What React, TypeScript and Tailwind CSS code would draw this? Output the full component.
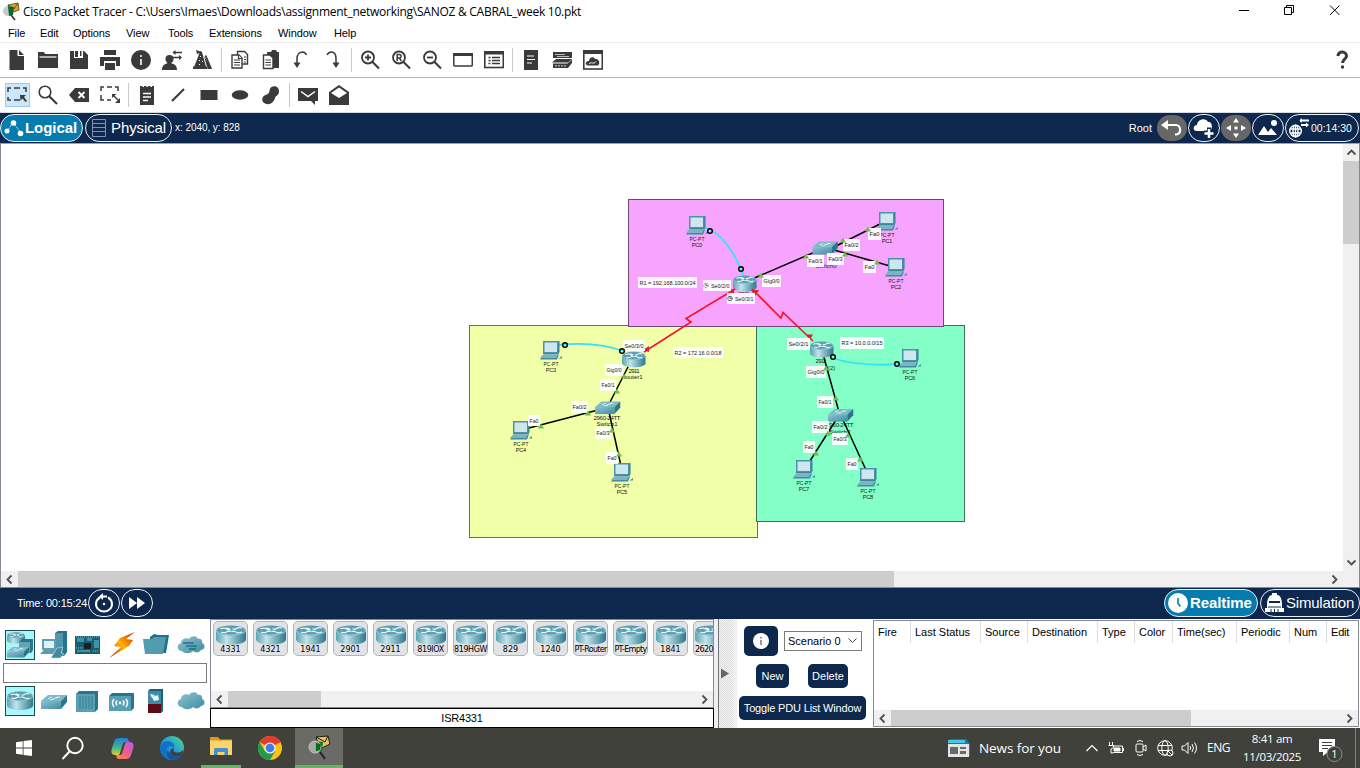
import React from "react";

const INK = "#3a3a3a";

function Ic({ children, w = 20, h = 20 }: { children: React.ReactNode; w?: number; h?: number }) {
  return (
    <svg width={w} height={h} viewBox={`0 0 ${w} ${h}`} fill={INK} className="shrink-0">
      {children}
    </svg>
  );
}

function Cell({ children }: { children: React.ReactNode }) {
  return <div className="flex w-[31px] shrink-0 items-center justify-center">{children}</div>;
}

function Sep() {
  return (
    <div className="flex w-[6px] shrink-0 items-center justify-center">
      <div className="h-6 w-px bg-[#c9c9c9]" />
    </div>
  );
}

function Defs() {
  return (
    <svg width="0" height="0" className="h-0 w-0">
      <defs>
        <linearGradient id="teal" x1="0" x2="1" y1="0" y2="0">
          <stop offset="0" stopColor="#5aa3b5" />
          <stop offset="0.35" stopColor="#c3e3ea" />
          <stop offset="1" stopColor="#2a788f" />
        </linearGradient>
        <linearGradient id="teal2" x1="0" x2="1" y1="0" y2="1">
          <stop offset="0" stopColor="#8fc3cf" />
          <stop offset="1" stopColor="#3d8da3" />
        </linearGradient>
        <linearGradient id="bolt" x1="0" x2="1" y1="1" y2="0">
          <stop offset="0" stopColor="#d81e05" />
          <stop offset="0.5" stopColor="#ffb300" />
          <stop offset="1" stopColor="#d81e05" />
        </linearGradient>
        <linearGradient id="edge" x1="0" x2="1" y1="1" y2="0">
          <stop offset="0" stopColor="#0c59a4" />
          <stop offset="0.5" stopColor="#1b9de2" />
          <stop offset="1" stopColor="#5bdc70" />
        </linearGradient>
        <linearGradient id="cop1" x1="0" x2="0" y1="0" y2="1">
          <stop offset="0" stopColor="#1f7fe8" />
          <stop offset="0.55" stopColor="#39b98a" />
          <stop offset="1" stopColor="#e8c72c" />
        </linearGradient>
        <linearGradient id="cop2" x1="1" x2="0" y1="0" y2="1">
          <stop offset="0" stopColor="#b65bea" />
          <stop offset="0.5" stopColor="#ee5b93" />
          <stop offset="1" stopColor="#f7923a" />
        </linearGradient>
        <pattern id="dither" width="2" height="2" patternUnits="userSpaceOnUse">
          <rect width="2" height="2" fill="#f4f4f4" />
          <rect width="1" height="1" fill="#dcdcdc" />
          <rect x="1" y="1" width="1" height="1" fill="#dcdcdc" />
        </pattern>
      </defs>
    </svg>
  );
}

function RouterShape() {
  return (
    <g>
      <path d="M0 7v12c0 4 6.500 6.500 14.500 6.500S29 23 29 19V7z" fill="url(#teal)" />
      <ellipse cx="14.500" cy="7" rx="14.500" ry="6.800" fill="#8fc1cd" />
      <ellipse cx="14.500" cy="6.600" rx="13.500" ry="5.600" fill="#5c9fb2" />
      <path
        d="M4 5l4-1 4 2 2-.8M10 3.500l4 2.200M25 4l-3-.8-4 2.400-2-.6M5 9.500l3.500.6 4-2.400 2 .6M25 9.200l-3.500 1.200-4.500-2.600-2 1"
        stroke="#f2fbfc"
        strokeWidth="1.400"
        fill="none"
      />
    </g>
  );
}

function SwitchShape() {
  return (
    <g>
      <path d="M0 6L7 0h19l-6 6z" fill="#7fb9c7" />
      <path d="M0 6h20v8H0z" fill="url(#teal2)" />
      <path d="M20 6l6-6v7l-6 7z" fill="#2d758c" />
      <path d="M7 3.500l4-1.500M12 4l5-2M9 4.500h4M15 2.500l4-.5" stroke="#e8f7fa" strokeWidth="0.900" />
    </g>
  );
}

function CloudShape() {
  return (
    <path
      d="M5 16C0 16-1 9 4 8 4 4 9 2 12 4c3-4 8-3 9 0 3-1 5 2 4 4 4 1 3 7-1 7-2 3-6 3-8 1-3 3-9 3-11 0z"
      fill="url(#teal2)"
    />
  );
}

/* ---------- topology ---------- */

type PcT = { x: number; y: number; n: string };
const pcs: PcT[] = [
  { x: 689, y: 216, n: "PC0" },
  { x: 879, y: 212, n: "PC1" },
  { x: 888, y: 258, n: "PC2" },
  { x: 543, y: 341, n: "PC3" },
  { x: 513, y: 421, n: "PC4" },
  { x: 614, y: 463, n: "PC5" },
  { x: 902, y: 349, n: "PC6" },
  { x: 796, y: 460, n: "PC7" },
  { x: 860, y: 468, n: "PC8" },
];

type LabelT = { x: number; y: number; w: number; t: string; h?: number; clock?: boolean };
const labels: LabelT[] = [
  { x: 638, y: 277, w: 59, t: "R1 = 192.168.100.0/24" },
  { x: 703, y: 280, w: 28, t: "Se0/2/0", clock: true },
  { x: 727, y: 293, w: 28, t: "Se0/3/1", clock: true },
  { x: 762, y: 275, w: 19, t: "Gig0/0", h: 12 },
  { x: 807, y: 255, w: 17, t: "Fa0/1", h: 12 },
  { x: 827, y: 253, w: 17, t: "Fa0/3", h: 12 },
  { x: 843, y: 239, w: 17, t: "Fa0/2", h: 12 },
  { x: 868, y: 228, w: 13, t: "Fa0", h: 12 },
  { x: 863, y: 261, w: 13, t: "Fa0", h: 12 },
  { x: 623, y: 340, w: 22, t: "Se0/3/0" },
  { x: 605, y: 364, w: 18, t: "Gig0/0", h: 12 },
  { x: 600, y: 379, w: 16, t: "Fa0/1", h: 12 },
  { x: 571, y: 401, w: 17, t: "Fa0/2", h: 12 },
  { x: 528, y: 415, w: 12, t: "Fa0" },
  { x: 595, y: 427, w: 16, t: "Fa0/3", h: 12 },
  { x: 606, y: 452, w: 12, t: "Fa0", h: 12 },
  { x: 673, y: 347, w: 50, t: "R2 = 172.16.0.0/18" },
  { x: 787, y: 338, w: 23, t: "Se0/2/1", h: 12 },
  { x: 806, y: 366, w: 20, t: "Gig0/0", h: 12 },
  { x: 817, y: 396, w: 16, t: "Fa0/1", h: 12 },
  { x: 812, y: 421, w: 17, t: "Fa0/2", h: 12 },
  { x: 832, y: 433, w: 16, t: "Fa0/3", h: 12 },
  { x: 803, y: 441, w: 12, t: "Fa0", h: 12 },
  { x: 846, y: 458, w: 12, t: "Fa0", h: 12 },
  { x: 840, y: 337, w: 44, t: "R3 = 10.0.0.0/15", h: 12 },
];

const ups: [number, number][] = [
  [761, 275], [806, 256], [843, 240], [868, 229], [845, 254], [877, 262],
  [624, 376], [617, 391], [588, 413], [541, 426], [612, 430], [619, 454],
  [826, 368], [836, 398], [828, 433], [816, 453], [848, 435], [860, 459],
];

const plugs: [number, number][] = [
  [710, 231], [741, 269], [565, 345], [622, 351], [833, 357], [897, 364],
];

function Pc({ x, y, n }: PcT) {
  return (
    <g transform={`translate(${x} ${y})`}>
      <path d="M-3 18.500l4-5h15l-2 5z" fill="#3f8ba1" />
      <path d="M-3 17l3-3.500h15l-2 3.500z" fill="#7db4c3" />
      <path d="M0 1l1-1h15.500v11l-1 2H0z" fill="#2f7f98" />
      <rect width="15.500" height="12.500" fill="#4a93a8" />
      <rect x="1.500" y="1.500" width="12.500" height="9.500" fill="#cfe6ee" />
      <path d="M15.500 17.500l3.500-2.500v2.500z" fill="#4a93a8" />
      <g fontSize="5.8" fill="#222" textAnchor="middle">
        <text x="8" y="24.500" textLength="15" lengthAdjust="spacingAndGlyphs">PC-PT</text>
        <text x="8" y="31.300" textLength="10.500">{n}</text>
      </g>
    </g>
  );
}

function Topology() {
  return (
    <svg width="1342" height="427" viewBox="1 144 1342 427" fontFamily="Liberation Sans, Arial, sans-serif" className="shrink-0">
      <rect x="469.500" y="325.500" width="288" height="212" fill="#f1ffa8" stroke="#6b7252" />
      <rect x="756.500" y="325.500" width="208" height="196" fill="#84ffc8" stroke="#40705c" />
      <rect x="628.500" y="199.500" width="315" height="127" fill="#f7a4fe" stroke="#6d4a70" />
      <g fontSize="6" fill="#222" textAnchor="middle">
        <text x="634" y="372.500" textLength="11">2911</text>
        <text x="632" y="379">Router1</text>
        <text x="607" y="419.500" textLength="27">2960-24TT</text>
        <text x="607" y="426">Switch1</text>
        <text x="821" y="363" textLength="11">2911</text>
        <text x="821" y="369.500">Router2(2)</text>
        <text x="840" y="426.500" textLength="27">2960-24TT</text>
        <text x="840" y="433.500">Switch2</text>
        <text x="744" y="296" textLength="11">2911</text>
        <text x="826" y="267.500">Switch0</text>
      </g>
      <g stroke="#000" strokeWidth="1.500">
        <path d="M752 279L815 252M834 247L882 223M834 250L890 266" />
        <path d="M629 365L608 406M598 410L525 429M609 412L621 466M823 354L839 412M836 420L808 464M843 420L866 470" />
      </g>
      <g fill="none" stroke="#2ee6f5" strokeWidth="1.800">
        <path d="M704 227Q729 236 744 277M558 345Q595 341 623 351M832 358Q860 367 899 364" />
      </g>
      {pcs.map((p) => (
        <Pc key={p.n} {...p} />
      ))}
      <g transform="translate(733 275) scale(.81 .65)"><RouterShape /></g>
      <g transform="translate(622 351.500) scale(.81 .62)"><RouterShape /></g>
      <g transform="translate(810 341) scale(.81 .65)"><RouterShape /></g>
      <g transform="translate(812.500 241.500) scale(.97 .93)"><SwitchShape /></g>
      <g transform="translate(595 401.500) scale(.97 .9)"><SwitchShape /></g>
      <g transform="translate(828 409) scale(.97 .9)"><SwitchShape /></g>
      <path d="M735 289L686 318.500L691 322L644 352" fill="none" stroke="#fb1028" strokeWidth="1.600" />
      <path d="M752 289L781 318L783 312.500L813 341" fill="none" stroke="#fb1028" strokeWidth="1.600" />
      <path d="M728 290l6-1 0 6zM751 290l8 0-4 6zM643 350l6-4 0 6zM806 334.500h7l-3 5z" fill="#d9232e" />
      {labels.map((l, i) => (
        <g key={i}>
          <rect x={l.x} y={l.y} width={l.w} height={l.h ?? 11} fill="#fff" fillOpacity=".93" />
          {l.clock && (
            <g fill="none" stroke="#222" strokeWidth=".7">
              <circle cx={l.x + 3} cy={l.y + 5.500} r="2.200" strokeDasharray={i === 1 ? "1.500 1" : undefined} />
              <path d={`M${l.x + 3} ${l.y + 4}v1.500h1.500`} />
            </g>
          )}
          <text
            x={l.x + (l.clock ? 8 : 1.5)}
            y={l.y + (l.h ? 8.2 : 7.8)}
            fontSize="5.800"
            fill="#222"
            textLength={l.clock ? 18.500 : l.w - 3}
            lengthAdjust="spacingAndGlyphs"
          >
            {l.t}
          </text>
        </g>
      ))}
      {ups.map(([x, y], i) => (
        <path key={i} d={`M${x} ${y - 2.500}l3 5h-6z`} fill="#6cbf4b" />
      ))}
      {plugs.map(([x, y], i) => (
        <circle key={i} cx={x} cy={y} r="2.300" fill="#fff" fillOpacity=".2" stroke="#000" strokeWidth="1.500" />
      ))}
    </svg>
  );
}

/* ---------- scroll bars ---------- */

function Chevron({ dir }: { dir: "left" | "right" | "up" | "down" }) {
  const d = {
    left: "M10.500 4.500L6.500 8.500L10.500 12.500",
    right: "M6.500 4.500L10.500 8.500L6.500 12.500",
    up: "M4.500 10.500L8.500 6.500L12.500 10.500",
    down: "M4.500 6.500L8.500 10.500L12.500 6.500",
  }[dir];
  return (
    <svg width="17" height="17" viewBox="0 0 17 17" className="shrink-0">
      <path d={d} fill="none" stroke="#505050" strokeWidth="1.800" />
    </svg>
  );
}

/* ---------- header ---------- */

function TitleBar() {
  return (
    <div className="flex h-6 items-center bg-white">
      <svg width="18" height="20" viewBox="0 0 18 20" className="ml-[2px] shrink-0">
        <path d="M6 3l10-2 1 7-9 3z" fill="#d9a82f" stroke="#4b3a10" strokeWidth=".8" />
        <path d="M6 3l6 4 4-6" fill="none" stroke="#4b3a10" strokeWidth=".8" />
        <circle cx="6" cy="9" r="5" fill="#b8c4c0" fillOpacity=".85" />
        <path d="M6 4l6 1-1 8-4 1z" fill="#0f6b2c" />
        <path d="M9 13l4 5" stroke="#333" strokeWidth="1.600" />
      </svg>
      <span className="ml-[3px] whitespace-nowrap font-['Open_Sans',sans-serif] text-[12px] leading-4 tracking-[-0.255px] text-black">
        Cisco Packet Tracer - C:\Users\Imaes\Downloads\assignment_networking\SANOZ &amp; CABRAL_week 10.pkt
      </span>
      <svg width="120" height="20" viewBox="0 0 120 20" className="ml-auto mr-[9px]" fill="none" stroke="#000">
        <path d="M8 8.500h10" />
        <path d="M53.500 5.500h7v7h-7zM55.500 5.500v-2h7v7h-2" />
        <path d="M99 3.500l9.500 9.500M108.500 3.500l-9.500 9.500" />
      </svg>
    </div>
  );
}

const menus: [string, string][] = [
  ["File", "w-8"],
  ["Edit", "w-[33px]"],
  ["Options", "w-[53px]"],
  ["View", "w-[42px]"],
  ["Tools", "w-[41px]"],
  ["Extensions", "w-[69px]"],
  ["Window", "w-14"],
  ["Help", "w-10"],
];

function Toolbar1() {
  const lens = <path d="M12.300 11.800l6.700 6.700" stroke={INK} strokeWidth="2" />;
  const ring = <circle cx="8" cy="7.500" r="6" fill="none" stroke={INK} strokeWidth="1.800" />;
  return (
    <div className="flex h-[35px] border-b border-[#b9b9b9] pl-[1.5px] pr-[3px]">
      <Cell><Ic><path d="M2.500 0h8v6H17v14H2.500zM12 0l5 5h-5z" /></Ic></Cell>
      <Cell><Ic><path d="M0 2h6l1 2h13v14H0z" /><path d="M1.500 7h17" stroke="#fff" strokeWidth="1.200" /></Ic></Cell>
      <Cell><Ic><path d="M1 1h14l4 4v14H1z" /><path d="M5 0h9v8H5z" fill="#fff" /><path d="M6 1h3v6H6zM11 1h1.500v5H11z" /></Ic></Cell>
      <Cell><Ic><path d="M4 0h12v5H4zM0 7h20v9h-4v-5H4v5H0z" /><path d="M5 13h10v7H5z" /><path d="M4 6h12M4 12h12" stroke="#fff" strokeWidth="1" /></Ic></Cell>
      <Cell><Ic><circle cx="10" cy="10" r="10" /><path d="M10 9v6" stroke="#fff" strokeWidth="1.600" /><circle cx="10" cy="6" r="1" fill="#fff" /></Ic></Cell>
      <Cell><Ic><circle cx="7.500" cy="9" r="4" /><path d="M0 20c0-5 3-6 5-6.500L5.500 12h4v1.500C12 14 15 15 15 20z" /><path d="M11 2.500h9M10 7.500h9" stroke={INK} strokeWidth="1.400" /><path d="M13.500 0v5l-3-2.500zM17 5v5l3-2.500z" /></Ic></Cell>
      <Cell>
        <Ic>
          <path d="M7 1l2 1 4 15H1l4-10zM0 16.500h14l1 2.500H0zM11 6l3.500 13H19z" />
          <path d="M12.500 5.500l5.500 13" stroke={INK} strokeWidth="1.800" />
          <path d="M3 0l6 2-5 2z" />
          <path d="M7 6l1 1M6 10l1 1M9 11l1 1M6 14l1 1" stroke="#fff" />
        </Ic>
      </Cell>
      <Sep />
      <Cell>
        <Ic>
          <g fill="#fff" stroke={INK} strokeWidth="1.400">
            <path d="M7.500 1.500h7l3 3V14h-10z" />
            <path d="M2 5h7l3 3v10H2z" />
            <path d="M4 10h6M4 12.500h6M4 15h6M14 7h2M14 9.500h2M14 12h2M8.500 5v3.500H12" strokeWidth="1.200" />
          </g>
        </Ic>
      </Cell>
      <Cell>
        <Ic>
          <path d="M6 2h4l1-2h4l1 2h2v16H8z" />
          <g fill="#fff" stroke={INK} strokeWidth="1.400">
            <path d="M2.500 5h6.500l3 3v10.500H2.500z" />
            <path d="M4.500 10h5.500M4.500 12.500h5.500M4.500 15h5.500" strokeWidth="1.200" />
          </g>
        </Ic>
      </Cell>
      <Cell><Ic><path d="M5 14V9c0-5 3-7 5.500-7 2 0 3 1 4 3" fill="none" stroke={INK} strokeWidth="1.500" /><path d="M1.500 12.500h7L5 18z" /></Ic></Cell>
      <Cell><Ic><path d="M13 14V9c0-5-2-7-4.500-7-2 0-3.500 1-4.500 3" fill="none" stroke={INK} strokeWidth="1.500" /><path d="M9.500 12.500h7L13 18z" /></Ic></Cell>
      <Sep />
      <Cell><Ic>{ring}{lens}<path d="M5 7.500h6M8 4.500v6" stroke={INK} strokeWidth="1.800" /></Ic></Cell>
      <Cell><Ic>{ring}{lens}<path d="M6.200 11V4.600h2.300a1.600 1.600 0 010 3.400H6.200M8.500 8l1.800 3" fill="none" stroke={INK} strokeWidth="1.500" /></Ic></Cell>
      <Cell><Ic>{ring}{lens}<path d="M5 7.500h6" stroke={INK} strokeWidth="1.800" /></Ic></Cell>
      <Cell><Ic><rect x=".8" y="4" width="18.500" height="12" rx="1" fill="#fff" stroke={INK} strokeWidth="1.500" /><path d="M0 3h20v3H0z" /></Ic></Cell>
      <Cell><Ic><rect x=".8" y="2" width="18.500" height="15.500" fill="#fff" stroke={INK} strokeWidth="1.600" /><path d="M0 1h20v3.500H0z" /><path d="M4.500 7.500h2M8 7.500h8M4.500 10.500h2M8 10.500h8M4.500 13.500h2M8 13.500h8" stroke={INK} strokeWidth="1.300" /></Ic></Cell>
      <Sep />
      <Cell><Ic><path d="M3 0h14v20H3z" /><path d="M6 6h7M6 9.500h8M6 13h5" stroke="#fff" strokeWidth="1.200" /></Ic></Cell>
      <Cell><Ic><path d="M1 2h19v6H1z" /><path d="M3 4.500h10M5 6.500h12" stroke="#bbb" strokeWidth="1" /><path d="M4 9h16l-4 3.500H0zM1 13.500h14.500l4.500-4V13l-4 5H1z" /><path d="M3 15.800h11" stroke="#bbb" strokeWidth="1.200" strokeDasharray="2 1" /></Ic></Cell>
      <Cell><Ic><rect x=".8" y="1" width="18.500" height="18" fill="#fff" stroke={INK} strokeWidth="1.600" /><path d="M0 0h20v4H0z" /><path d="M5 15.500c-4-1-2-5 1-4.500 0-4 5-5 6-2 4-1 6 5 2.500 6.500z" /><path d="M6 14c2-3 5 1 7-2.500" stroke="#fff" fill="none" /></Ic></Cell>
      <div className="ml-auto flex"><Cell><Ic><path d="M6 6C6 .5 14.500 1 14.500 6c0 3.200-4 3-4 7" fill="none" stroke={INK} strokeWidth="3" /><circle cx="10.500" cy="17" r="1.700" /></Ic></Cell></div>
    </div>
  );
}

function Toolbar2() {
  return (
    <div className="flex h-[35px] border-b border-[#d5dbe2] pl-[1.5px]">
      <Cell>
        <div className="flex h-6 w-[25px] items-center justify-center border border-[#99cdf5] bg-[#cce6fb]">
          <Ic><path d="M1 7V3h3M7 3h6M16 3h3v4M1 12v3h3M7 15h6" fill="none" stroke={INK} strokeWidth="1.500" /><path d="M13 10h6l-2 2 3 4-1.500 1-3-3.500-2 2z" /></Ic>
        </div>
      </Cell>
      <Cell><Ic><circle cx="7" cy="7" r="5.800" fill="none" stroke={INK} strokeWidth="1.600" /><path d="M11 11l8 8" stroke={INK} strokeWidth="2.200" /></Ic></Cell>
      <Cell><Ic><path d="M0 10l6-7h14v14H6z" /><path d="M9.500 7l6 6M15.500 7l-6 6" stroke="#fff" strokeWidth="1.800" /></Ic></Cell>
      <Cell><Ic><path d="M1 6V2h3M7 2h5M15 2h3v4M1 10v5h3M7 15h4" fill="none" stroke={INK} strokeWidth="1.500" /><path d="M14 11l4 4" stroke={INK} strokeWidth="1.500" /><path d="M12 9h4.500L12 13zM20 18v-5l-5 5z" /></Ic></Cell>
      <Sep />
      <Cell><Ic><path d="M3 1h14v19H3z" /><path d="M5.500 1h1.500M9.500 1h1.500M13.500 1h1.500" stroke="#fff" strokeWidth="2" /><path d="M6 8.500h8M6 12h8M6 15.500h5" stroke="#fff" strokeWidth="1.300" /></Ic></Cell>
      <Cell><Ic><path d="M4 16L16 4" stroke={INK} strokeWidth="2.200" /></Ic></Cell>
      <Cell><Ic><path d="M1.500 5h17v10h-17z" /></Ic></Cell>
      <Cell><Ic><ellipse cx="10" cy="10" rx="8.300" ry="4.700" /></Ic></Cell>
      <Cell><Ic><path d="M9 4c1-4 9-4 9 2 0 5-3 4-4 7-1 4-5 7-8.500 6-6-1-5-8-1-9S8 7 9 4z" /></Ic></Cell>
      <Sep />
      <Cell><Ic><path d="M0 3h20v13h-3v4l-4-4H0z" /><path d="M3 6.500l7 5 7-5" fill="none" stroke="#fff" strokeWidth="1.500" /></Ic></Cell>
      <Cell><Ic><path d="M0 7l10-7 10 7v13H0z" /><path d="M2 8l8-5.500L18 8l-8 5z" fill="#fff" /></Ic></Cell>
    </div>
  );
}

function NavBar() {
  return (
    <div className="flex h-[30px] items-center bg-[#0e274c] text-white">
      <div className="flex h-[28px] w-[83px] items-center rounded-[14px] border border-[#e8f2f8] bg-[#067bad] pl-[3px]">
        <svg width="20" height="20" viewBox="0 0 20 20" className="shrink-0" fill="#fff">
          <path d="M3 14L9 4L17 15" fill="none" stroke="#fff" strokeWidth=".8" strokeDasharray="2 1" />
          <circle cx="3" cy="13" r="2.500" /><circle cx="9.500" cy="5" r="2.800" /><circle cx="16.500" cy="15.500" r="2.800" />
        </svg>
        <span className="ml-[1px] text-[15px] font-bold leading-5 tracking-[-0.05px]">Logical</span>
      </div>
      <div className="ml-[2px] flex h-[28px] w-[87px] items-center rounded-[14px] border border-[#e8f2f8] pl-[5px]">
        <svg width="16" height="20" viewBox="0 0 16 20" className="shrink-0" fill="none" stroke="#7d93b4">
          <path d="M1.500 1.500h13v17h-13zM1.500 5.500h13M1.500 9.500h13M1.500 13.500h13" />
        </svg>
        <span className="ml-[4px] text-[15px] leading-5 tracking-[-0.1px]">Physical</span>
      </div>
      <span className="ml-[3px] text-[10px] leading-4 tracking-[-0.06px]">x: 2040, y: 828</span>
      <span className="ml-auto mr-[5px] text-[11px] leading-4">Root</span>
      <div className="flex h-[26px] w-[30px] items-center justify-center rounded-[13px] bg-[#676767]">
        <svg width="22" height="18" viewBox="0 0 22 18"><path d="M0 6l7-5v10z" fill="#fff" /><path d="M5 6h10c5 0 6 9 0 9.500h-1" fill="none" stroke="#fff" strokeWidth="2.200" /></svg>
      </div>
      <div className="ml-px flex h-[28px] w-[32px] items-center justify-center rounded-[14px] border border-[#e8f2f8]">
        <svg width="22" height="22" viewBox="0 0 22 22" fill="#fff"><path d="M4 14c-5 0-4-6 0-6 0-6 9-8 11-3 5-1 5 8 1 9z" /><path d="M16 10.500v10M11 15.500h10" stroke="#0e274c" strokeWidth="4" /><path d="M16 12v9M11.500 16.500h9" stroke="#fff" strokeWidth="2.500" /></svg>
      </div>
      <div className="ml-px flex h-[26px] w-[30px] items-center justify-center rounded-[13px] bg-[#676767]">
        <svg width="20" height="20" viewBox="0 0 20 20" fill="#fff"><path d="M10 0l3 4.500H7zM10 20l-3-4.500h6zM0 10l5-3v6zM20 10l-5 3V7z" /><rect x="8.500" y="8.500" width="3" height="3" /></svg>
      </div>
      <div className="ml-px flex h-[28px] w-[32px] items-center justify-center rounded-[14px] border border-[#e8f2f8]">
        <svg width="20" height="20" viewBox="0 0 20 20" fill="#fff"><path d="M0 17l6-9 4 6 3-4 6 7z" /><circle cx="16" cy="5" r="3" /></svg>
      </div>
      <div className="ml-px mr-px flex h-[28px] w-[74px] items-center rounded-[14px] border border-[#e8f2f8] pl-[3px]">
        <svg width="20" height="20" viewBox="0 0 20 20" className="shrink-0" fill="none" stroke="#fff" strokeWidth="1.400">
          <circle cx="6.500" cy="13" r="5.800" /><ellipse cx="6.500" cy="13" rx="2.500" ry="5.800" /><path d="M1 11h11M1 15h11M6.500 7v12" />
          <path d="M11 2.500h9M12 7h7" strokeWidth="1.800" /><path d="M13 0v5L10.500 2.500zM17 4.500v5l3-2.500z" fill="#fff" stroke="none" />
        </svg>
        <span className="ml-[2px] text-[10.500px] leading-4">00:14:30</span>
      </div>
    </div>
  );
}

/* ---------- lower panels ---------- */

function TimeBar() {
  return (
    <div className="flex h-[31px] items-center bg-[#0e274c] pb-px text-white">
      <span className="ml-[17px] w-[71px] whitespace-nowrap text-[11px] leading-4 tracking-[-0.2px]">Time: 00:15:24</span>
      <div className="flex h-[28px] w-[32px] items-center justify-center rounded-[14px] border border-[#e8f2f8]">
        <svg width="20" height="20" viewBox="0 0 20 20" fill="none" stroke="#fff" strokeWidth="2"><path d="M6 4.500a8 7.500 0 108 0M6 3.500h7" /><path d="M9 0v7L5 3.500z" fill="#fff" stroke="none" /><circle cx="10" cy="11" r="1.200" fill="#fff" stroke="none" /></svg>
      </div>
      <div className="ml-px flex h-[28px] w-[32px] items-center justify-center rounded-[14px] border border-[#e8f2f8]">
        <svg width="18" height="14" viewBox="0 0 18 14" fill="#fff"><path d="M1 1l8 6-8 6zM9 1l8 6-8 6z" /></svg>
      </div>
      <div className="ml-auto flex h-[28px] w-[94px] items-center rounded-[14px] border border-[#e8f2f8] bg-[#067bad] pl-[3px]">
        <svg width="20" height="20" viewBox="0 0 20 20" className="shrink-0"><circle cx="10" cy="10" r="10" fill="#fff" /><path d="M10 5v5.500l2.500 3" fill="none" stroke="#067bad" strokeWidth="1.600" /></svg>
        <span className="ml-[2px] text-[15px] font-bold leading-5 tracking-[-0.1px]">Realtime</span>
      </div>
      <div className="ml-[2px] flex h-[28px] w-[100px] items-center rounded-[14px] border border-[#e8f2f8] pl-[3px]">
        <svg width="21" height="20" viewBox="0 0 21 20" className="shrink-0" fill="#fff"><path d="M3 12C3 5 6 2 8 2V0h5v2c3 0 5 3 5 10v3h2v4H1v-4h2z" /><path d="M5 9h11" stroke="#0e274c" strokeWidth="2" /><path d="M4 14h13M7 16v4M10.500 16v4M14 16v4" stroke="#0e274c" strokeWidth="1" /></svg>
        <span className="ml-[1px] text-[15px] leading-5 tracking-[-0.2px]">Simulation</span>
      </div>
    </div>
  );
}

function Slot({ children, on, w = "w-[34px]" }: { children: React.ReactNode; on?: boolean; w?: string }) {
  return (
    <div className={`flex h-[30px] shrink-0 items-center justify-center ${w} ${on ? "border border-[#1b4a54] bg-[#a6f8fb]" : ""}`}>
      <svg width="28" height="28" viewBox="0 0 28 28" overflow="visible">{children}</svg>
    </div>
  );
}

function DevicePalette() {
  return (
    <div className="flex w-[210px] shrink-0 flex-col bg-white pt-[11px]">
      <div className="flex pl-[5px]">
        <Slot on w="w-[30px]">
          <g transform="translate(1 1) scale(.62 .45)"><RouterShape /></g>
          <path d="M13 11l3-3h11v11l-2 3H13z" fill="#27748b" /><path d="M13 11h11v11H13z" fill="#63a2b3" />
          <g transform="translate(1 16) scale(.85 .75)"><SwitchShape /></g>
        </Slot>
        <div className="w-[2px]" />
        <Slot>
          <path d="M15 2l3-2h9v21l-3 4h-9z" fill="#26748c" /><path d="M15 2h8v22h-8z" fill="#4e96aa" />
          <path d="M2 8h14v11H2z" fill="#5ba0b3" /><path d="M4 10h10v7H4z" fill="#e4f1f4" /><path d="M0 23l4-4h12l-3 4z" fill="#5c9cae" /><path d="M11 27l6-10 6-1-2 6 3 1-4 4z" fill="#3e8ba1" stroke="#c3dee6" strokeWidth=".6" />
        </Slot>
        <Slot>
          <path d="M1 5h25v18H1z" fill="#175e70" /><path d="M3 7h7v4H3zM13 7h5v3h-5zM20 9h5v8h-5zM3 19h13v2H3z" fill="#3f93a5" /><path d="M10 12h7v6h-7z" fill="#191f24" /><path d="M2 6h23M2 17h7M19 20h6" stroke="#95c4cc" strokeDasharray="1 1" />
        </Slot>
        <Slot><path d="M27 1L12 7 6 15l7 1L1 27l20-12 4-6-7-1z" fill="url(#bolt)" /></Slot>
        <Slot><path d="M8 6l4-3 4 1h11l-3 18H8z" fill="#1d7283" /><path d="M1 8l9 0 2-2h12l-3 17H3z" fill="#539caf" /></Slot>
        <Slot><g transform="translate(1 4)"><CloudShape /><path d="M6 8h11M9 11h11M12 14h7" stroke="#266f84" strokeWidth="1.300" /></g></Slot>
      </div>
      <div className="mx-[3px] my-[3px] h-5 border border-[#7a7a7a]" />
      <div className="flex pl-[5px]">
        <Slot on w="w-[30px]"><g transform="translate(1 4) scale(.9 .75)"><RouterShape /></g></Slot>
        <div className="w-[2px]" />
        <Slot><g transform="translate(1 8)"><SwitchShape /></g></Slot>
        <Slot><path d="M2 7l3-3h19v18l-3 3H2z" fill="#27758c" /><path d="M2 7h19v18H2z" fill="#579fb2" /><path d="M6 9v13M9 9v13M12 9v13M15 9v13M18 9v13" stroke="#377f94" /></Slot>
        <Slot><path d="M1 9l3-3h22v15l-3 3H1z" fill="#27758c" /><path d="M1 9h22v15H1z" fill="#579fb2" /><path d="M6 12q-3 4 0 8M9 13.500q-2 2.500 0 5M18 12q3 4 0 8M15 13.500q2 2.500 0 5" fill="none" stroke="#f4fbfc" strokeWidth="1.500" /><circle cx="12" cy="16" r="1.400" fill="#f4fbfc" /></Slot>
        <Slot><path d="M6 4l2-2h13v22l-2 2H6z" fill="#1d6178" /><path d="M6 4h13v13H6z" fill="#3f8ba3" /><path d="M6 17h13v9H6z" fill="#5c0b12" /><path d="M8 7l5 1-3 3zM10 10l6-2 1 5-5 1z" fill="#e8f5f8" /></Slot>
        <Slot><g transform="translate(1 4)"><CloudShape /></g></Slot>
      </div>
    </div>
  );
}

const models = ["4331", "4321", "1941", "2901", "2911", "819IOX", "819HGW", "829", "1240", "PT-Router", "PT-Empty", "1841"];

function ModelList() {
  return (
    <div className="flex w-[504px] shrink-0 flex-col">
      <div className="flex h-[89px] flex-col border border-[#848a94] bg-white">
        <div className="flex flex-1 gap-[5px] pl-[2px] pt-[1px]">
          {models.map((m) => (
            <div key={m} className="flex h-[35px] w-[35px] shrink-0 flex-col items-center rounded-[5px] border border-[#b6b2ae] bg-[#e3e3e5] pt-[3px]">
              <svg width="30" height="20" viewBox="0 0 29 26" preserveAspectRatio="none" className="shrink-0"><RouterShape /></svg>
              <span className={`whitespace-nowrap font-['DejaVu_Sans',sans-serif] leading-[10px] text-black ${m.length > 6 ? "text-[8px] tracking-[-0.7px]" : m.length > 5 ? "text-[8px] tracking-[-0.4px]" : "text-[8px]"}`}>{m}</span>
            </div>
          ))}
          <div className="flex h-[35px] w-[20px] shrink-0 flex-col rounded-l-[5px] border border-r-0 border-[#b6b2ae] bg-[#e3e3e5] pl-px pt-[3px]">
            <svg width="18" height="20" viewBox="0 0 17.400 26" preserveAspectRatio="none" className="shrink-0"><RouterShape /></svg>
            <span className="whitespace-nowrap font-['DejaVu_Sans',sans-serif] text-[8px] leading-[10px] tracking-[-0.6px] text-black">2620</span>
          </div>
        </div>
        <div className="flex h-4 items-center bg-[#f0f0f0]">
          <Chevron dir="left" />
          <div className="h-4 w-[93px] bg-[#cdcdcd]" />
          <div className="ml-auto"><Chevron dir="right" /></div>
        </div>
      </div>
      <div className="flex h-[20px] items-center justify-center border border-black bg-white text-[11px] leading-4 tracking-[-0.2px]">ISR4331</div>
    </div>
  );
}

const cols: [string, string][] = [
  ["Fire", "w-[37px]"],
  ["Last Status", "w-[70px]"],
  ["Source", "w-[47px]"],
  ["Destination", "w-[70px]"],
  ["Type", "w-[37px]"],
  ["Color", "w-[38px]"],
  ["Time(sec)", "w-[64px]"],
  ["Periodic", "w-[53px]"],
  ["Num", "w-[37px]"],
];

const btn = "flex items-center justify-center whitespace-nowrap rounded-[5px] bg-[#0e274c] text-[11px] leading-4 text-white";

function PduPanel() {
  return (
    <>
      <div className="flex w-[136px] shrink-0 flex-col bg-white pl-[2px] pt-[7px]">
        <div className="flex items-center pl-[5px]">
          <div className={`${btn} h-[30px] w-[34px]`}>
            <svg width="16" height="16" viewBox="0 0 16 16"><circle cx="8" cy="8" r="8" fill="#fff" /><path d="M8 7v5" stroke="#8a8fa0" strokeWidth="1.800" /><circle cx="8" cy="4.800" r="1" fill="#8a8fa0" /></svg>
          </div>
          <div className="ml-[6px] flex h-5 w-[78px] items-center justify-between border border-[#7a7a7a] pl-[3px] pr-1 text-[11px] leading-4">
            Scenario 0
            <svg width="9" height="6" viewBox="0 0 9 6"><path d="M.5.500l4 4 4-4" fill="none" stroke="#444" /></svg>
          </div>
        </div>
        <div className="mt-2 flex gap-[19px] pl-[17px]">
          <div className={`${btn} h-6 w-[33px]`}>New</div>
          <div className={`${btn} h-6 w-[40px]`}>Delete</div>
        </div>
        <div className={`${btn} mt-2 h-6 w-[127px] tracking-[-0.17px]`}>Toggle PDU List Window</div>
      </div>
      <div className="mb-px ml-0 mr-px mt-px flex flex-1 flex-col border border-[#848a94] bg-white">
        <div className="flex h-[22px] items-center text-[11px] leading-4">
          {cols.map(([t, w]) => (
            <div key={t} className={`flex h-full shrink-0 items-center whitespace-nowrap border-r border-[#dedede] pl-1 ${w}`}>{t}</div>
          ))}
          <div className="pl-1 tracking-[-0.2px]">Edit</div>
        </div>
        <div className="mt-auto flex h-[16px] items-center bg-[#f0f0f0]">
          <Chevron dir="left" />
          <div className="h-full w-[300px] bg-[#cdcdcd]" />
          <div className="ml-auto"><Chevron dir="right" /></div>
        </div>
      </div>
    </>
  );
}

function Task({ children, state = "" }: { children: React.ReactNode; state?: string }) {
  return (
    <div className={`flex h-10 w-[49px] shrink-0 flex-col items-center justify-center ${state}`}>{children}</div>
  );
}

function Taskbar() {
  return (
    <div className="flex h-10 bg-[#40413b] font-['Open_Sans',sans-serif] text-white">
      <Task state="pr-px"><svg width="16" height="16" viewBox="0 0 16 16" fill="#fff"><path d="M0 2.200l6.700-.9v6.300H0zM7.500 1.100L16 0v7.600H7.500zM0 8.400h6.700v6.300L0 13.800zM7.500 8.400H16V16l-8.500-1.100z" /></svg></Task>
      <Task state="pr-[2px]"><svg width="24" height="24" viewBox="0 0 24 24" fill="none" stroke="#fff" strokeWidth="1.900"><circle cx="14" cy="9.500" r="7.700" /><path d="M8.500 15.500L1.500 23" /></svg></Task>
      <Task>
        <svg width="23" height="23" viewBox="0 0 23 23">
          <path d="M8 1h7c2 0 2.500 1.500 3 4h-4c-1.500 0-2 1-2.500 3L9 16c-.5 2-1.500 2-3 2H4c-4 0-4-4-3-7l2-6c1-3 2.500-4 5-4z" fill="url(#cop1)" />
          <path d="M15 22H8c-2 0-2.500-1.500-3-4h4c1.500 0 2-1 2.500-3L14 7c.5-2 1.500-2 3-2h2c4 0 4 4 3 7l-2 6c-1 3-2.500 4-5 4z" fill="url(#cop2)" />
        </svg>
      </Task>
      <Task>
        <svg width="24" height="24" viewBox="0 0 24 24">
          <circle cx="12" cy="12" r="12" fill="url(#edge)" />
          <path d="M0 12c1-6 7-8 11-6 3 1.500 4 4 3 6-2-3-8-2-8 4 0 4 3 7 6 8C5 24 0 19 0 12z" fill="#1271c4" />
          <path d="M14 12c-1 2-1 4 3 4.500 3 .3 5-1 6.500-3l-1 5c-3 3-10 3-12-1-1-3 1-5.500 3.500-5.500z" fill="#40413b" />
          <path d="M10.500 17.500c2 3.500 8 4 12 1-2 3-6 5.500-10 5.500-4-1-7-5-5-10 0 1 2 2.500 3 3.500z" fill="#1457a0" />
        </svg>
      </Task>
      <div className="ml-[5px] flex h-10 w-10 flex-col items-center border-b-[3px] border-[#62b463] pt-[9px]">
        <svg width="22" height="19" viewBox="0 0 22 19"><path d="M0 0h8l2 2.500h12V5H0z" fill="#d89b1d" /><path d="M0 3.500h22V18H0z" fill="#fbd56b" /><path d="M4 18v-5c0-1.500 1-2 2-2h10c1 0 2 .5 2 2v5h-3.500v-3h-7v3z" fill="#3f8fd8" /></svg>
      </div>
      <div className="ml-[5px]">
        <Task state="pr-[2px]">
          <svg width="24" height="24" viewBox="0 0 24 24">
            <circle cx="12" cy="12" r="12" fill="#fbc116" />
            <path d="M12 12L1.600 6A12 12 0 0122.400 6z" fill="#e33b2e" /><path d="M1.600 6A12 12 0 0012 24l5.200-9L12 12l-5.200 3z" fill="#229b4a" /><path d="M12 6.500h10.700A12 12 0 0012 0v6.500z" fill="#e33b2e" />
            <circle cx="12" cy="12" r="5.600" fill="#fff" /><circle cx="12" cy="12" r="4.400" fill="#3f7de8" />
          </svg>
        </Task>
      </div>
      <div className="flex h-10 w-12 justify-center border-b-[3px] border-[#62b463] bg-[#6a6b67] pt-[7px]">
        <svg width="24" height="25" viewBox="0 0 24 25"><path d="M9 2l12-1 2 8-10 5z" fill="#edbd62" stroke="#1c1c16" /><path d="M9 2l9 5 3-6" fill="none" stroke="#1c1c16" /><path d="M8 6l8 1-1 9-6 1z" fill="#08741f" /><circle cx="8" cy="12" r="6" fill="#d9dcda" fillOpacity=".55" stroke="#c4c6c4" /><path d="M9 8l5 1-1 6-4 1z" fill="#086b1c" /><path d="M13 17l5 7" stroke="#222" strokeWidth="2" /></svg>
      </div>
      <div className="ml-auto flex items-center">
        <svg width="22" height="18" viewBox="0 0 22 18"><path d="M0 2l2-2h16l4 5v12H0z" fill="#1d73b8" /><path d="M0 1h17v3H0z" fill="#45c7e8" /><path d="M0 5h21v13H0z" fill="#e3e4e3" /><path d="M2 8h8v7H2zM12 8h6v2h-6zM12 12h6v3h-6z" fill="#646b6b" /></svg>
        <span className="ml-[9px] w-[82px] whitespace-nowrap text-[13.500px] leading-5 tracking-[-0.08px]">News for you</span>
        <svg width="14" height="8" viewBox="0 0 14 8" className="ml-[24px]" fill="none" stroke="#fff" strokeWidth="1.200"><path d="M1.500 7l5.500-5.500L12.500 7" /></svg>
        <svg width="17" height="14" viewBox="0 0 17 14" className="ml-[9px]" fill="none" stroke="#fff"><path d="M1.500 1v3M4.500 1v3M.5 4.500h5v2l-2.500 1.500v4h2M5 5h9.500v6.500H5M15.500 7v3" /><path d="M6 7h6v3H6z" fill="#fff" /></svg>
        <svg width="15" height="18" viewBox="0 0 15 18" className="ml-[9px]" fill="none" stroke="#fff"><rect x="2" y="5" width="7" height="8" rx="1" /><path d="M9 8l3-2v6l-3-2M3 2.500q3-2 6 0M3 15.500q3 2 6 0" /></svg>
        <svg width="17" height="17" viewBox="0 0 17 17" className="ml-[8px]" fill="none" stroke="#fff"><circle cx="8" cy="8" r="7.300" /><ellipse cx="8" cy="8" rx="3.200" ry="7.300" /><path d="M1 5.500h14M1 10.500h14" /><circle cx="13" cy="13" r="3" fill="#40413b" /><path d="M11 11l4 4" /></svg>
        <svg width="17" height="14" viewBox="0 0 17 14" className="ml-[7px]" fill="none" stroke="#fff"><path d="M1 5h2.500L7 1.500v11L3.500 9H1zM9 5q1.500 2 0 4M11 3q3 4 0 8M13.500 1.500q4 5.500 0 11" /></svg>
        <span className="ml-[9px] w-[24px] whitespace-nowrap text-[12px] leading-4 tracking-[-0.5px]">ENG</span>
        <div className="ml-[9px] flex w-[64px] flex-col items-center whitespace-nowrap text-[11.500px] leading-[18px] tracking-[-0.3px]">
          <span>8:41 am</span>
          <span>11/03/2025</span>
        </div>
        <svg width="26" height="28" viewBox="0 0 26 28" className="ml-[15px] mr-[10px]"><path d="M0 5h16v13h-7l-5 4v-4H0z" fill="#fff" /><path d="M3 8.500h10M3 11.500h10M3 14.500h6" stroke="#40413b" /><circle cx="15.500" cy="20" r="7.500" fill="#40413b" stroke="#8d8e8b" /><text x="15.500" y="24" fontSize="11" textAnchor="middle" fill="#fff">1</text></svg>
        <div className="h-10 w-[5px] border-l border-[#81827e]" />
      </div>
    </div>
  );
}

export default function App() {
  return (
    <div className="flex h-[768px] w-[1360px] flex-col overflow-hidden bg-white font-['Liberation_Sans',Arial,sans-serif] text-black">
      <Defs />
      <TitleBar />
      <div className="flex h-[19px] items-center border-b border-[#ececec] pl-2 text-[11px] leading-4 tracking-[-0.1px]">
        {menus.map(([t, w]) => (
          <span key={t} className={`shrink-0 ${w}`}>{t}</span>
        ))}
      </div>
      <Toolbar1 />
      <Toolbar2 />
      <NavBar />
      <div className="flex h-[445px] flex-col border border-b-[#848a94] border-l-[#848a94] border-r-[#848a94] border-t-[#9aa3ad]">
        <div className="flex h-[427px]">
          <Topology />
          <div className="flex w-[16px] flex-col items-center bg-[#f0f0f0]">
            <Chevron dir="up" />
            <div className="h-[83px] w-full bg-[#cdcdcd]" />
            <div className="mt-auto"><Chevron dir="down" /></div>
          </div>
        </div>
        <div className="flex h-4 items-center bg-[#f0f0f0]">
          <Chevron dir="left" />
          <div className="h-4 w-[876px] bg-[#cdcdcd]" />
          <div className="ml-auto mr-[16px]"><Chevron dir="right" /></div>
        </div>
      </div>
      <TimeBar />
      <div className="flex h-[109px]">
        <DevicePalette />
        <ModelList />
        <div className="flex w-[23px] shrink-0 bg-[#f0f0f0] pl-[4px]">
          <div className="w-px bg-[#6e7378]" />
          <svg width="14" height="109" viewBox="0 0 14 109"><rect width="14" height="109" fill="url(#dither)" /><path d="M2 49.500l8 5-8 5z" fill="#666" /></svg>
        </div>
        <PduPanel />
      </div>
      <Taskbar />
    </div>
  );
}
